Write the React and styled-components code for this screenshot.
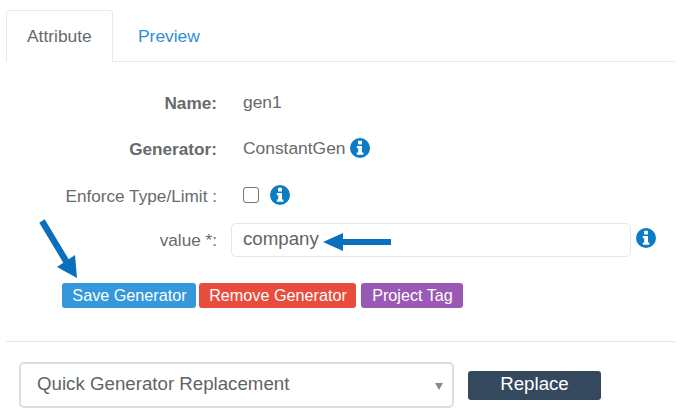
import React from 'react';
import styled, { createGlobalStyle } from 'styled-components';

const GlobalStyle = createGlobalStyle`
  html, body {
    margin: 0;
    padding: 0;
    background: #ffffff;
  }
  body {
    font-family: "Liberation Sans", Arial, sans-serif;
    color: #676a6c;
  }
`;

function InfoIcon({ size = 20 }) {
  return (
    <svg width={size} height={size} viewBox="0 0 20 20" aria-hidden="true">
      <circle cx="10" cy="10" r="10" fill="#0a7cc4" />
      <rect x="8" y="2.8" width="4" height="3.6" rx="0.6" fill="#fff" />
      <path d="M6.8 8h5.2v6.6h1.4v2.2H6.8v-2.2h1.4v-4.4H6.8z" fill="#fff" />
    </svg>
  );
}

export default function App() {
  return (
    <Page>
      <GlobalStyle />
      <Tabs>
        <Tab $active>Attribute</Tab>
        <Tab>Preview</Tab>
      </Tabs>

      <Form>
        <Row $height={46}>
          <Label $bold>Name:</Label>
          <Value>gen1</Value>
        </Row>
        <Row $height={46}>
          <Label $bold>Generator:</Label>
          <Value>
            ConstantGen
            <InfoSlot $gap={5}>
              <InfoIcon />
            </InfoSlot>
          </Value>
        </Row>
        <Row $height={48}>
          <Label>Enforce Type/Limit :</Label>
          <Value>
            <Check />
            <InfoSlot $gap={11}>
              <InfoIcon />
            </InfoSlot>
          </Value>
        </Row>
        <InputRow>
          <Label>value *:</Label>
          <InputBox>
            <span>company</span>
            <LeftArrow viewBox="0 0 68 20" aria-hidden="true">
              <path d="M0 10 L20 1 V7 H68 V13 H20 V19 Z" fill="#0a70bd" />
            </LeftArrow>
          </InputBox>
          <InfoSlot $gap={5} $up={4}>
            <InfoIcon />
          </InfoSlot>
        </InputRow>

        <Buttons>
          <DownArrow viewBox="0 0 45 65" aria-hidden="true">
            <path d="M4.3 7.7 L9.7 4.3 L33.7 44.3 L40 40 L42 63 L22 52 L28.3 47.7 Z" fill="#0a70bd" />
          </DownArrow>
          <Action $color="#3498db" $width={134}>Save Generator</Action>
          <Action $color="#e74c3c" $width={157}>Remove Generator</Action>
          <Action $color="#9b59b6" $width={102} $gap={5}>Project Tag</Action>
        </Buttons>
      </Form>

      <Divider />

      <Quick>
        <SelectBox>
          Quick Generator Replacement
          <Caret />
        </SelectBox>
        <ReplaceButton>Replace</ReplaceButton>
      </Quick>
    </Page>
  );
}

/// Main wrapper
const Page = styled.div`
  width: 685px;
  height: 419px;
  padding: 10px 10px 0 6px;
  box-sizing: border-box;
  overflow: hidden;
  background: #fff;
`;

/// Tabs
const Tabs = styled.div`
  display: flex;
  height: 52px;
  box-sizing: border-box;
  border-bottom: 1px solid #e7eaec;
`;

const Tab = styled.div`
  width: ${(p) => (p.$active ? '107px' : 'auto')};
  height: ${(p) => (p.$active ? '52px' : '51px')};
  box-sizing: border-box;
  padding: ${(p) => (p.$active ? '15px 0 0 20px' : '16px 0 0 25px')};
  font-size: 17.4px;
  line-height: 20px;
  color: ${(p) => (p.$active ? '#676a6c' : '#2f8fd6')};
  background: #fff;
  ${(p) =>
    p.$active &&
    `
    border: 1px solid #e7eaec;
    border-bottom: none;
    border-radius: 4px 4px 0 0;
  `}
`;

/// Form rows
const Form = styled.div`
  padding-top: 18px;
`;

const Row = styled.div`
  display: flex;
  align-items: center;
  height: ${(p) => p.$height}px;
`;

const Label = styled.div`
  width: 211px;
  flex: none;
  text-align: right;
  font-size: 17.2px;
  font-weight: ${(p) => (p.$bold ? 700 : 400)};
  color: #676a6c;
`;

const Value = styled.div`
  display: flex;
  align-items: center;
  margin-left: 26px;
  margin-top: -2px;
  font-size: 17.4px;
`;

const InfoSlot = styled.span`
  display: inline-flex;
  margin-left: ${(p) => p.$gap}px;
  margin-top: ${(p) => (p.$up ? `-${p.$up}px` : '0')};
`;

const Check = styled.span`
  display: inline-block;
  width: 16px;
  height: 16px;
  box-sizing: border-box;
  border: 1px solid #767676;
  border-radius: 3px;
  background: #fff;
`;

const InputRow = styled.div`
  display: flex;
  align-items: center;
  height: 34px;
  margin-top: 3px;
`;

const InputBox = styled.div`
  position: relative;
  width: 400px;
  height: 34px;
  margin-left: 14px;
  padding: 0 0 2px 11px;
  box-sizing: border-box;
  display: flex;
  align-items: center;
  border: 1px solid #e5e6e7;
  border-radius: 5px;
  font-size: 18.7px;
  color: #5f6468;
`;

const LeftArrow = styled.svg`
  position: absolute;
  left: 91px;
  top: 8px;
  width: 68px;
  height: 20px;
`;

/// Action buttons
const Buttons = styled.div`
  position: relative;
  display: flex;
  gap: 3px;
  margin: 26px 0 0 56px;
`;

const DownArrow = styled.svg`
  position: absolute;
  left: -27px;
  top: -68px;
  width: 45px;
  height: 65px;
`;

const Action = styled.button`
  width: ${(p) => p.$width}px;
  height: 25px;
  margin-left: ${(p) => (p.$gap ? p.$gap - 3 : 0)}px;
  padding: 0 0 0 1px;
  border: none;
  border-radius: 3px;
  background: ${(p) => p.$color};
  color: #fff;
  font-family: inherit;
  font-size: 16.2px;
`;

const Divider = styled.div`
  height: 1px;
  margin-top: 33px;
  background: #e7e7e7;
`;

/// Quick replacement
const Quick = styled.div`
  display: flex;
  align-items: center;
  gap: 14px;
  margin: 20px 0 0 13px;
`;

const SelectBox = styled.div`
  position: relative;
  width: 435px;
  height: 46px;
  box-sizing: border-box;
  padding: 0 0 3px 16px;
  display: flex;
  align-items: center;
  border: 2px solid #dedede;
  border-radius: 5px;
  font-size: 18.7px;
  color: #5f6468;
`;

const Caret = styled.span`
  position: absolute;
  right: 9px;
  top: 19px;
  width: 0;
  height: 0;
  border-left: 4px solid transparent;
  border-right: 4px solid transparent;
  border-top: 7px solid #8a8a8a;
`;

const ReplaceButton = styled.button`
  width: 133px;
  height: 29px;
  padding: 0 0 2px;
  border: none;
  border-radius: 3px;
  background: #34495e;
  color: #fff;
  font-family: inherit;
  font-size: 18.7px;
`;
